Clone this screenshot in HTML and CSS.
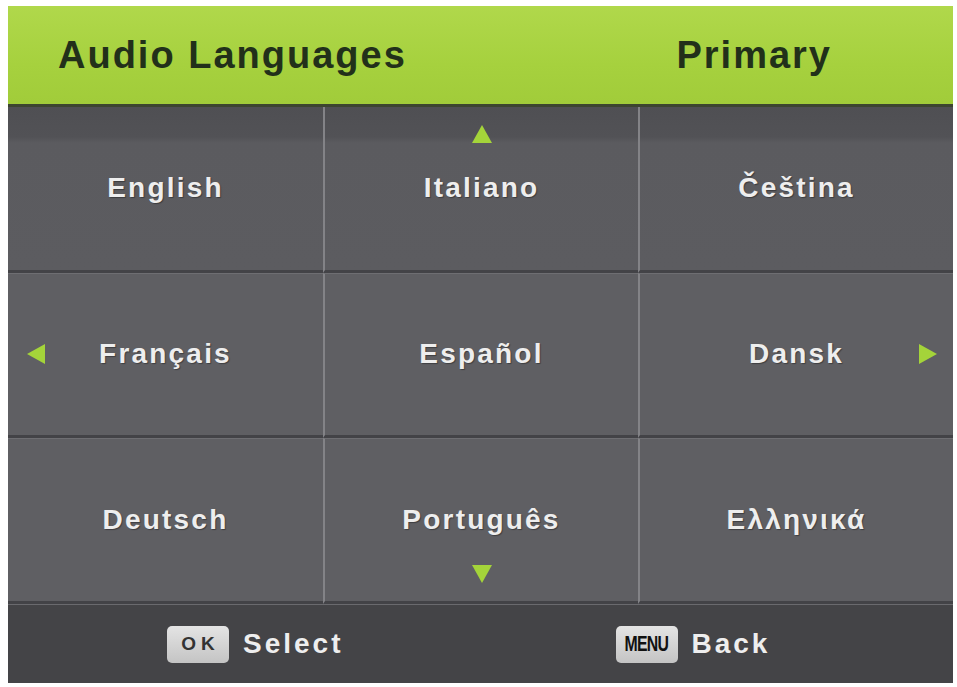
FILE: index.html
```html
<!DOCTYPE html>
<html lang="en">
<head>
  <meta charset="UTF-8">
  <title>Audio Languages</title>
  <link rel="stylesheet" href="styles.css">
</head>
<body>
  <div class="osd">
    <div class="osd-head">
      <span>Audio Languages</span>
      <span>Primary</span>
    </div>

    <div class="lang-grid">
      <div class="cell top">English</div>
      <div class="cell top">
        <svg class="arrow arrow-up" width="20" height="18" viewBox="0 0 20 18"><polygon points="10,0 20,18 0,18"/></svg>
        Italiano
      </div>
      <div class="cell top">Čeština</div>

      <div class="cell">
        <svg class="arrow arrow-left" width="18" height="20" viewBox="0 0 18 20"><polygon points="0,10 18,0 18,20"/></svg>
        Français
      </div>
      <div class="cell">Español</div>
      <div class="cell">
        Dansk
        <svg class="arrow arrow-right" width="18" height="20" viewBox="0 0 18 20"><polygon points="18,10 0,0 0,20"/></svg>
      </div>

      <div class="cell">Deutsch</div>
      <div class="cell">
        Português
        <svg class="arrow arrow-down" width="20" height="18" viewBox="0 0 20 18"><polygon points="0,0 20,0 10,18"/></svg>
      </div>
      <div class="cell">Ελληνικά</div>
    </div>

    <div class="osd-foot">
      <div class="hint">
        <span class="key key-ok">OK</span>
        <span>Select</span>
      </div>
      <div class="hint">
        <span class="key key-menu"><span>MENU</span></span>
        <span>Back</span>
      </div>
    </div>
  </div>
</body>
</html>
```

FILE: styles.css
```css
body {
  margin: 0;
  background: #ffffff;
  font-family: "Liberation Sans", Arial, sans-serif;
}

.osd {
  width: 945px;
  height: 677px;
  margin: 6px 0 0 8px;
  display: flex;
  flex-direction: column;
  background: #434346;
}

/* green title bar */
.osd-head {
  height: 98px;
  display: flex;
  justify-content: space-between;
  align-items: center;
  padding: 0 121px 0 50px;
  background: linear-gradient(#b0d84b, #a6d13e 60%, #a1cc3a);
  border-bottom: 3px solid #3c4530;
  color: #22301a;
  font-size: 38px;
  font-weight: bold;
  letter-spacing: 2px;
}

/* 3x3 language picker */
.lang-grid {
  height: 497px;
  display: grid;
  grid-template-columns: repeat(3, 1fr);
  grid-template-rows: repeat(3, 1fr);
  background: #5e5e62;
}

.cell {
  position: relative;
  display: flex;
  align-items: center;
  justify-content: center;
  background: #5f5f63;
  border-left: 2px solid #838387;
  border-bottom: 3px solid #434347;
  border-top: 1px solid #6e6e72;
  color: #eeeeee;
  font-size: 28px;
  font-weight: bold;
  letter-spacing: 2.2px;
  text-shadow: 1px 1px 1px rgba(0, 0, 0, 0.35);
}

.cell:nth-child(3n+1) {
  border-left: 0;
}

.cell.top {
  border-top: 0;
  background: linear-gradient(#4f4f53 0, #525256 30px, #5b5b5f 36px, #5c5c60);
}

.arrow {
  position: absolute;
  fill: #a4d43a;
}

.arrow-up {
  top: 18px;
  left: calc(50% - 10px);
}

.arrow-down {
  bottom: 18px;
  left: calc(50% - 10px);
}

.arrow-left {
  left: 19px;
  top: calc(50% - 10px);
}

.arrow-right {
  right: 16px;
  top: calc(50% - 10px);
}

/* button hints */
.osd-foot {
  flex: 1;
  display: flex;
  align-items: center;
  gap: 272px;
  padding-left: 159px;
  border-top: 1px solid #6a6a6e;
  background: #444447;
  color: #eeeeee;
  font-size: 28px;
  font-weight: bold;
  letter-spacing: 3px;
}

.hint {
  display: flex;
  align-items: center;
  gap: 14px;
}

.key {
  width: 62px;
  height: 37px;
  display: flex;
  align-items: center;
  justify-content: center;
  border-radius: 5px;
  background: linear-gradient(#e4e4e4, #c4c4c4);
  color: #2b2b2b;
  letter-spacing: 0;
  text-shadow: none;
}

.key-ok {
  font-size: 19px;
  letter-spacing: 5px;
  padding-left: 5px;
  box-sizing: border-box;
  color: #333333;
}

.key-menu span {
  display: inline-block;
  font-size: 22px;
  font-weight: bold;
  color: #111111;
  letter-spacing: -1px;
  transform: scaleX(0.72);
}
```
